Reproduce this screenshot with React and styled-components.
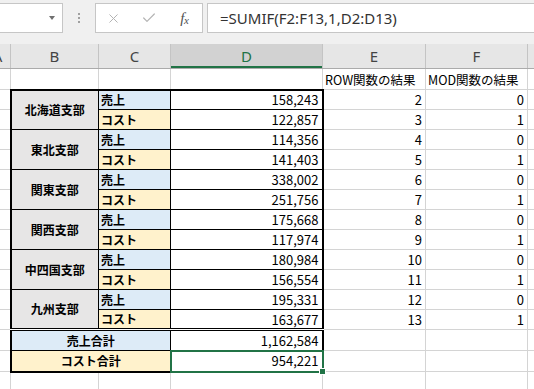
import React from "react";
import styled, { createGlobalStyle, css } from "styled-components";
import { X, Check } from "lucide-react";

const GlobalStyle = createGlobalStyle`
  html, body {
    margin: 0;
    padding: 0;
    background: #ffffff;
    overflow: hidden;
  }
  body {
    width: 534px;
    height: 389px;
  }
`;

const branches = [
  { name: "北海道支部", sales: "158,243", cost: "122,857" },
  { name: "東北支部", sales: "114,356", cost: "141,403" },
  { name: "関東支部", sales: "338,002", cost: "251,756" },
  { name: "関西支部", sales: "175,668", cost: "117,974" },
  { name: "中四国支部", sales: "180,984", cost: "156,554" },
  { name: "九州支部", sales: "195,331", cost: "163,677" },
];

const columns = [
  { key: "A", width: 26 },
  { key: "B", width: 88 },
  { key: "C", width: 72 },
  { key: "D", width: 152 },
  { key: "E", width: 103 },
  { key: "F", width: 102 },
  { key: "G", width: 60 },
];

const GRID = "#d4d4d4";
const INK = "#000000";
const GREEN = "#217346";
const SALES_BG = "#ddebf7";
const COST_BG = "#fff2cc";

const Screen = styled.div`
  width: 534px;
  height: 389px;
  overflow: hidden;
  background: #ffffff;
`;

const Toolbar = styled.div`
  height: 44px;
  background: #f0f0f0;
  display: flex;
  align-items: flex-start;
  padding-top: 3px;
  box-sizing: border-box;
`;

const NameBox = styled.div`
  margin-left: -20px;
  width: 83px;
  height: 30px;
  box-sizing: border-box;
  background: #ffffff;
  border: 1px solid #c6c6c6;
  display: flex;
  align-items: center;
  justify-content: flex-end;
  padding-right: 7px;
`;

const Caret = styled.span`
  width: 0;
  height: 0;
  border-left: 3.5px solid transparent;
  border-right: 3.5px solid transparent;
  border-top: 4px solid #6f6f6f;
`;

const Grip = styled.div`
  width: 32px;
  height: 30px;
  display: flex;
  flex-direction: column;
  align-items: center;
  justify-content: center;
  gap: 2px;

  span {
    width: 2px;
    height: 2px;
    background: #a0a0a0;
  }
`;

const FxBox = styled.div`
  width: 108px;
  height: 30px;
  box-sizing: border-box;
  background: #ffffff;
  border: 1px solid #c6c6c6;
  display: flex;
  align-items: center;
`;

const FxSlot = styled.span`
  width: 36px;
  display: flex;
  justify-content: center;
  align-items: center;
  color: ${(p) => (p.$active ? "#505050" : "#b4b4b4")};
`;

const FxLabel = styled.span`
  font-family: "Liberation Serif", serif;
  font-style: italic;
  font-size: 15px;
  color: #505050;
  letter-spacing: -0.5px;

  sub {
    font-size: 11px;
    vertical-align: -1px;
  }
`;

const FormulaBox = styled.div`
  flex: 1;
  margin-left: 4px;
  margin-right: -10px;
  height: 30px;
  box-sizing: border-box;
  background: #ffffff;
  border: 1px solid #c6c6c6;
  display: flex;
  align-items: center;
  padding-left: 12px;
  font-family: "Noto Sans", "Liberation Sans", sans-serif;
  font-size: 15px;
  color: #333333;
`;

const SheetWrap = styled.div`
  overflow: hidden;
`;

const Sheet = styled.table`
  margin-left: -16px;
  border-collapse: collapse;
  table-layout: fixed;
  width: ${columns.reduce((s, c) => s + c.width, 0)}px;
  font-family: "Noto Sans CJK JP", "Noto Sans", sans-serif;
  font-size: 12px;
  color: #000000;
`;

const HeadCell = styled.th`
  height: 24px;
  padding: 0;
  background: ${(p) => (p.$selected ? "#d2d2d2" : "#e6e6e6")};
  color: ${(p) => (p.$selected ? GREEN : "#444444")};
  font-family: "Noto Sans", "Liberation Sans", sans-serif;
  font-weight: normal;
  font-size: 15px;
  text-align: center;
  border-left: 1px solid #c4c4c4;
  border-right: 1px solid #c4c4c4;
  border-bottom: 1px solid #ababab;
  box-shadow: ${(p) => (p.$selected ? `inset 0 -2px 0 ${GREEN}` : "none")};
`;

const Row = styled.tr`
  height: ${(p) => p.$h}px;
`;

const Cell = styled.td`
  border: 1px solid ${GRID};
  padding: 0 3px;
  white-space: nowrap;
  overflow: hidden;
  vertical-align: middle;
  line-height: 1;
`;

const tableEdge = css`
  border-color: ${INK};
  ${(p) => p.$top && `border-top: 2px solid ${INK};`}
  ${(p) => p.$bottom && `border-bottom: 2px solid ${INK};`}
  ${(p) => p.$double && `border-top: 3px double ${INK};`}
`;

const BranchCell = styled(Cell)`
  ${tableEdge};
  border-left: 2px solid ${INK};
  background: #e7e6e6;
  font-weight: bold;
  text-align: center;
`;

const KindCell = styled(Cell)`
  ${tableEdge};
  background: ${(p) => (p.$kind === "cost" ? COST_BG : SALES_BG)};
  font-weight: bold;
  text-align: left;
  padding-left: 2px;
`;

const TotalLabel = styled(Cell)`
  ${tableEdge};
  border-left: 2px solid ${INK};
  background: ${(p) => (p.$kind === "cost" ? COST_BG : SALES_BG)};
  font-weight: bold;
  text-align: center;
`;

const AmountCell = styled(Cell)`
  ${tableEdge};
  border-right: 2px solid ${INK};
  text-align: right;
  font-size: 13px;
  padding-right: 3px;
  position: relative;
  overflow: visible;
`;

const Selection = styled.span`
  position: absolute;
  left: -1px;
  top: -1px;
  right: -2px;
  bottom: -2px;
  border: 2px solid ${GREEN};
  pointer-events: none;

  &::after {
    content: "";
    position: absolute;
    right: -4px;
    bottom: -4px;
    width: 5px;
    height: 5px;
    background: ${GREEN};
    border: 1px solid #ffffff;
  }
`;

const NumCell = styled(Cell)`
  text-align: right;
  font-size: 13px;
  padding-right: 3px;
`;

const NoteCell = styled(Cell)`
  text-align: left;
  padding-left: 2px;
  font-size: 12.5px;
  vertical-align: bottom;
  padding-bottom: 3px;
`;

const App = () => {
  const rows = [];
  branches.forEach((b, i) => {
    const first = i === 0;
    const n = i * 2 + 2;
    rows.push(
      <Row $h={20} key={`${b.name}-s`}>
        <Cell />
        <BranchCell rowSpan={2} $top={first}>
          {b.name}
        </BranchCell>
        <KindCell $kind="sales" $top={first}>
          売上
        </KindCell>
        <AmountCell $top={first}>{b.sales}</AmountCell>
        <NumCell>{n}</NumCell>
        <NumCell>{n % 2}</NumCell>
        <Cell />
      </Row>
    );
    rows.push(
      <Row $h={20} key={`${b.name}-c`}>
        <Cell />
        <KindCell $kind="cost">コスト</KindCell>
        <AmountCell>{b.cost}</AmountCell>
        <NumCell>{n + 1}</NumCell>
        <NumCell>{(n + 1) % 2}</NumCell>
        <Cell />
      </Row>
    );
  });

  return (
    <Screen>
      <GlobalStyle />
      <Toolbar>
        <NameBox>
          <Caret />
        </NameBox>
        <Grip>
          <span />
          <span />
          <span />
        </Grip>
        <FxBox>
          <FxSlot>
            <X size={15} strokeWidth={1.6} />
          </FxSlot>
          <FxSlot>
            <Check size={16} strokeWidth={1.8} />
          </FxSlot>
          <FxSlot $active>
            <FxLabel>
              f<sub>x</sub>
            </FxLabel>
          </FxSlot>
        </FxBox>
        <FormulaBox>=SUMIF(F2:F13,1,D2:D13)</FormulaBox>
      </Toolbar>

      <SheetWrap>
        <Sheet>
          <colgroup>
            {columns.map((c) => (
              <col key={c.key} style={{ width: c.width }} />
            ))}
          </colgroup>
          <thead>
            <tr>
              {columns.map((c) => (
                <HeadCell key={c.key} $selected={c.key === "D"}>
                  {c.key === "G" ? "" : c.key}
                </HeadCell>
              ))}
            </tr>
          </thead>
          <tbody>
            <Row $h={21}>
              <Cell />
              <Cell />
              <Cell />
              <Cell />
              <NoteCell>ROW関数の結果</NoteCell>
              <NoteCell>MOD関数の結果</NoteCell>
              <Cell />
            </Row>
            {rows}
            <Row $h={21}>
              <Cell />
              <TotalLabel colSpan={2} $kind="sales" $double>
                売上合計
              </TotalLabel>
              <AmountCell $double>1,162,584</AmountCell>
              <Cell />
              <Cell />
              <Cell />
            </Row>
            <Row $h={21}>
              <Cell />
              <TotalLabel colSpan={2} $kind="cost" $bottom>
                コスト合計
              </TotalLabel>
              <AmountCell $bottom>
                954,221
                <Selection />
              </AmountCell>
              <Cell />
              <Cell />
              <Cell />
            </Row>
            <Row $h={21}>
              <Cell />
              <Cell />
              <Cell />
              <Cell />
              <Cell />
              <Cell />
              <Cell />
            </Row>
          </tbody>
        </Sheet>
      </SheetWrap>
    </Screen>
  );
};

export default App;
